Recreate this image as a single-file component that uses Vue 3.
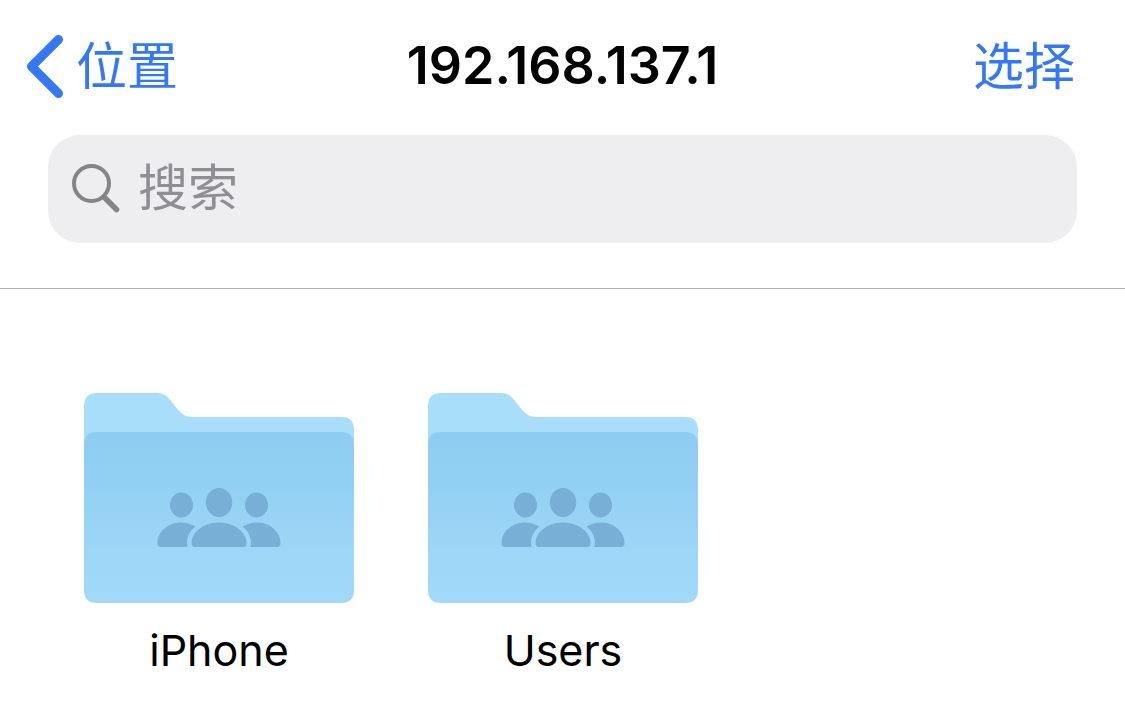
<script setup>
import { ref } from 'vue'

const query = ref('')
const folders = ['iPhone', 'Users']
</script>

<template>
  <div class="browser">
    <header class="top">
      <nav class="bar">
        <button class="action back" type="button">
          <svg class="chevron" viewBox="0 0 38 64" aria-hidden="true">
            <path d="M32.500 5.500L5.500 32.500L32.500 59.500" />
          </svg>
          <span class="label">位置</span>
        </button>
        <h1 class="title">192.168.137.1</h1>
        <button class="action choose" type="button"><span class="label">选择</span></button>
      </nav>
      <label class="search">
        <svg class="lens" viewBox="0 0 48 50" aria-hidden="true">
          <circle cx="19.500" cy="20.500" r="17.500" stroke-width="4" />
          <path d="M32 34L44.500 46.500" stroke-width="5.500" />
        </svg>
        <input v-model="query" class="field" type="text" placeholder="搜索" aria-label="搜索" />
      </label>
    </header>

    <main class="files">
      <a v-for="name in folders" :key="name" class="folder" href="#">
        <svg class="art" viewBox="0 0 270 210" aria-hidden="true">
          <defs>
            <linearGradient :id="'front-' + name" x1="0" y1="0" x2="0" y2="1">
              <stop offset="0" stop-color="#8ecdf1" />
              <stop offset="0.300" stop-color="#92d0f3" />
              <stop offset="0.700" stop-color="#9dd6f7" />
              <stop offset="1" stop-color="#a2d9f9" />
            </linearGradient>
          </defs>
          <path
            fill="#a9defb"
            d="M0 13Q0 0 13 0H73C80 0 83 3 87 8L93 15.500C98 21 101 24 109 24H257Q270 24 270 37V100H0Z"
          />
          <path
            :fill="`url(#front-${name})`"
            d="M0 52Q0 39 13 39H257Q270 39 270 52V197Q270 210 257 210H13Q0 210 0 197Z"
          />
          <g fill="#77afd6">
            <ellipse cx="97.500" cy="112" rx="11.500" ry="12.500" />
            <ellipse cx="135" cy="109.500" rx="13.200" ry="14.500" />
            <ellipse cx="172.500" cy="112" rx="11.500" ry="12.500" />
            <path d="M77 154Q73.500 154 73.500 150C73.500 138 85 129.500 97 129.500C102 129.500 107 131 111.500 133.500C105 138 101.500 147 103.800 154Z" />
            <path d="M193 154Q196.500 154 196.500 150C196.500 138 185 129.500 173 129.500C168 129.500 163 131 158.500 133.500C165 138 168.500 147 166.200 154Z" />
            <path d="M111 154Q107.500 154 107.500 150C107.500 139 120 129.500 135 129.500C150 129.500 162.500 139 162.500 150Q162.500 154 159 154Z" />
          </g>
        </svg>
        <span class="name">{{ name }}</span>
      </a>
    </main>
  </div>
</template>

<style>
body {
  background: #fff;
}
</style>

<style scoped>
.browser {
  color: #000;
  font-family: Inter, "Noto Sans CJK SC", sans-serif;
}

.top {
  padding: 24px 48px 45px;
  border-bottom: 1px solid #b2b2b4;
}

.bar {
  display: grid;
  grid-template-columns: 1fr auto 1fr;
  align-items: center;
  height: 84px;
  margin: 0 -22px 27px;
}

.action {
  display: flex;
  align-items: center;
  padding: 0;
  border: 0;
  background: none;
  color: #3478f6;
  font: 400 51px/72px "Noto Sans CJK SC", sans-serif;
  cursor: pointer;
}

.label {
  padding-bottom: 6px;
}

.back {
  justify-self: start;
  gap: 12px;
}

.choose {
  justify-self: end;
  padding-right: 24px;
}

.chevron {
  width: 38px;
  height: 64px;
  fill: none;
  stroke: currentColor;
  stroke-width: 9;
  stroke-linecap: round;
  stroke-linejoin: round;
}

.title {
  margin: 0;
  font-size: 52px;
  font-weight: 600;
  line-height: 74px;
}

.search {
  display: flex;
  box-sizing: border-box;
  align-items: center;
  gap: 18px;
  height: 108px;
  padding: 0 24px 2px;
  border-radius: 32px;
  background: #eeeef0;
}

.lens {
  flex: none;
  width: 48px;
  height: 50px;
  fill: none;
  stroke: #858588;
  stroke-linecap: round;
}

.field {
  flex: 1;
  min-width: 0;
  height: 72px;
  padding: 0 0 8px;
  border: 0;
  outline: 0;
  background: none;
  color: #000;
  font: 400 50px/72px "Noto Sans CJK SC", sans-serif;
}

.field::placeholder {
  color: #8e8e93;
  opacity: 1;
}

.files {
  display: grid;
  grid-template-columns: repeat(auto-fill, 270px);
  gap: 74px;
  padding: 104px 48px 48px 84px;
}

.folder {
  display: flex;
  flex-direction: column;
  align-items: center;
  gap: 19px;
  color: inherit;
  text-decoration: none;
}

.art {
  width: 270px;
  height: 210px;
}

.name {
  font-size: 43px;
  line-height: 56px;
}
</style>
